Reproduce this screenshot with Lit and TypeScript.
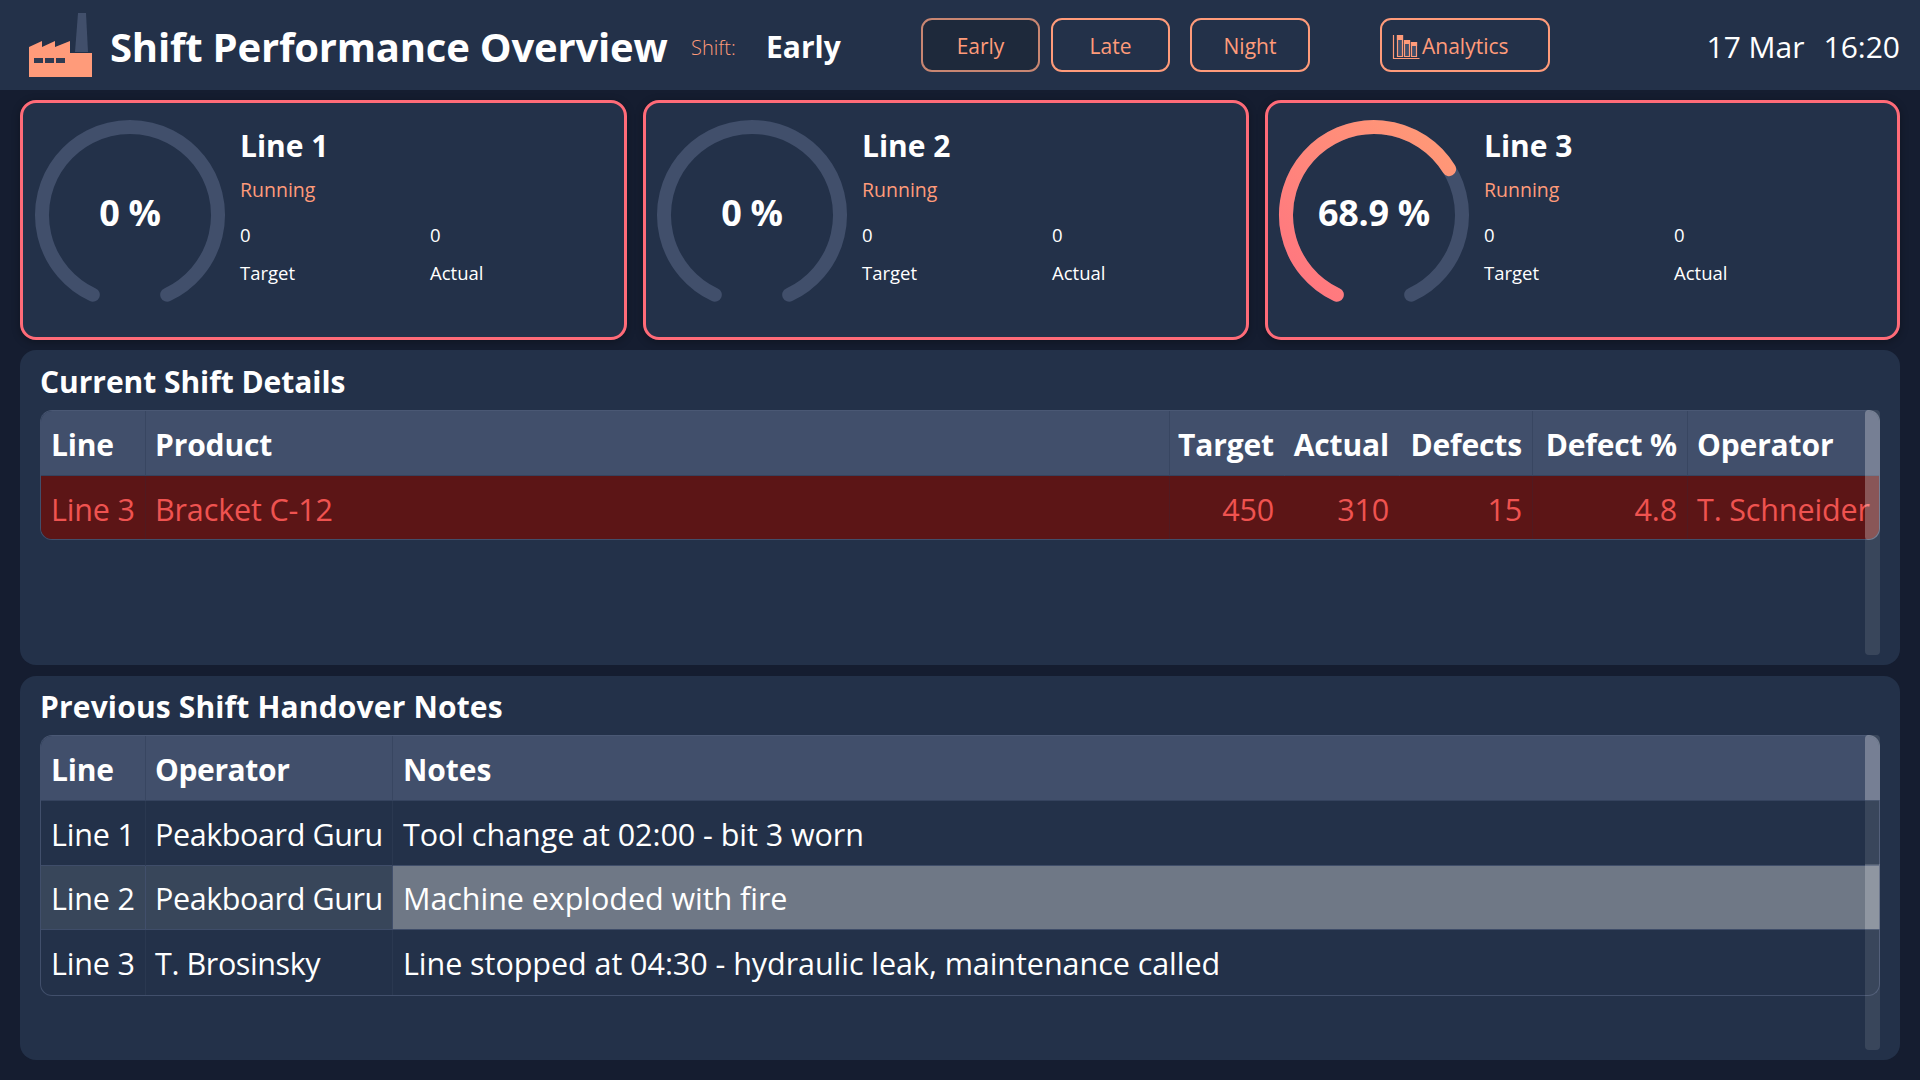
import { LitElement, html, css, svg } from "lit";
import { customElement } from "lit/decorators.js";

const R = 88;
const SWEEP = 310;

function gaugeArc(pct: number) {
  const start = 205;
  const end = start + (SWEEP * pct) / 100;
  const pt = (a: number) => {
    const r = (a * Math.PI) / 180;
    return [105 + R * Math.sin(r), 105 - R * Math.cos(r)];
  };
  const [x1, y1] = pt(start);
  const [x2, y2] = pt(end);
  return `M${x1} ${y1} A${R} ${R} 0 ${end - start > 180 ? 1 : 0} 1 ${x2} ${y2}`;
}

const lines = [
  { name: "Line 1", pct: 0, label: "0 %" },
  { name: "Line 2", pct: 0, label: "0 %" },
  { name: "Line 3", pct: 68.9, label: "68.9 %" },
];

const handover = [
  ["Line 1", "Peakboard Guru", "Tool change at 02:00 - bit 3 worn"],
  ["Line 2", "Peakboard Guru", "Machine exploded with fire"],
  ["Line 3", "T. Brosinsky", "Line stopped at 04:30 - hydraulic leak, maintenance called"],
];

@customElement("app-root")
export class AppRoot extends LitElement {
  static styles = css`
    :host {
      display: block;
      width: 1920px;
      height: 1080px;
      overflow: hidden;
      background: #151d30;
      color: #fff;
      font-family: "Open Sans", "Noto Sans", sans-serif;
      font-stretch: 90%;
    }
    .top {
      height: 90px;
      background: #233149;
      display: flex;
      align-items: center;
      position: relative;
    }
    .logo {
      width: 80px;
      height: 90px;
      margin-left: 20px;
      flex: none;
    }
    .title {
      font-size: 40px;
      font-weight: 700;
      letter-spacing: -0.2px;
      margin-left: 10px;
      width: 581px;
      white-space: nowrap;
      padding-top: 2px;
    }
    .shift-label {
      font-size: 20px;
      color: #ff9b7a;
      font-weight: 300;
      width: 75px;
      padding-top: 5px;
    }
    .shift-value {
      font-size: 30px;
      font-weight: 700;
      width: 155px;
      padding-top: 2px;
    }
    .btn {
      height: 54px;
      box-sizing: border-box;
      border: 2px solid #ff9b7a;
      border-radius: 11px;
      background: transparent;
      color: #ff9b7a;
      font: inherit;
      font-size: 21px;
      display: flex;
      align-items: center;
      justify-content: center;
      padding: 2px 0 0;
    }
    .btn.active {
      background: #1e293b;
      border-color: #c98672;
    }
    .b1 { width: 119px; margin-right: 11px; }
    .b2 { width: 119px; margin-right: 20px; }
    .b3 { width: 120px; margin-right: 70px; }
    .b4 {
      width: 170px;
      justify-content: flex-start;
      padding-left: 10px;
      gap: 2px;
    }
    .b4 svg { width: 28px; height: 28px; flex: none; }
    .clock {
      margin-left: auto;
      margin-right: 20px;
      font-size: 30px;
      display: flex;
      gap: 19px;
      font-weight: 400;
      padding-top: 2px;
    }

    .cards {
      display: grid;
      grid-template-columns: 607px 606px 635px;
      gap: 16px;
      padding: 10px 20px;
    }
    .card {
      height: 240px;
      box-sizing: border-box;
      border: 3px solid #ff6b78;
      border-radius: 16px;
      background: #233149;
      box-shadow: 0 2px 8px rgba(0, 0, 0, 0.3);
      display: flex;
      padding: 7px 0 0 2px;
    }
    .card + .card { padding-left: 1px; }
    .gauge {
      width: 210px;
      height: 210px;
      position: relative;
      flex: none;
    }
    .gauge svg { display: block; }
    .gauge-text {
      position: absolute;
      inset: 0 0 6px;
      display: flex;
      align-items: center;
      justify-content: center;
      font-size: 36px;
      font-weight: 700;
      letter-spacing: -0.3px;
    }
    .info { margin-left: 5px; padding-top: 16px; flex: 1; }
    .info h3 {
      margin: 0;
      font-size: 30px;
      font-weight: 700;
      line-height: 40px;
    }
    .status {
      color: #ff9b7a;
      font-size: 19.5px;
      font-weight: 400;
      line-height: 26px;
      margin-top: 11px;
    }
    .kpis {
      display: grid;
      grid-template-columns: 190px 1fr;
      font-size: 18.5px;
      line-height: 26px;
      margin-top: 19px;
      row-gap: 12px;
    }

    .panel {
      position: relative;
      margin: 0 20px;
      background: #233149;
      border-radius: 16px;
      box-sizing: border-box;
      padding: 0 20px;
    }
    .p1 { height: 315px; }
    .p2 { height: 384px; margin-top: 11px; }
    .panel h2 {
      margin: 0;
      font-size: 30px;
      font-weight: 700;
      letter-spacing: -0.05px;
      height: 60px;
      line-height: 64px;
    }
    .p2 h2 { height: 59px; line-height: 62px; letter-spacing: 0.15px; }
    .tbl {
      border: 1px solid #414f6b;
      border-top-color: #4a5874;
      border-radius: 12px;
      overflow: hidden;
      font-size: 30.5px;
      letter-spacing: -0.15px;
    }
    .row {
      display: grid;
      height: 64.5px;
      align-items: stretch;
    }
    .shift { grid-template-columns: 105px 1024px 115px 115px 133px 155px 1fr; }
    .notes { grid-template-columns: 105px 247px 1fr; }
    .cell {
      padding: 2px 10px 0;
      display: flex;
      align-items: center;
      white-space: nowrap;
      overflow: hidden;
      border-right: 1px solid #2a3850;
      border-bottom: 1px solid #3f4d69;
    }
    .cell:last-child { border-right: 0; }
    .cell.open { border-right-color: transparent; }
    .row:last-child .cell { border-bottom: 0; }
    .num { justify-content: flex-end; }
    .cell:nth-child(2) { padding-left: 9px; }
    .shift .cell:last-child { padding-left: 9px; }
    .notes .cell:nth-child(2) { letter-spacing: -0.4px; }
    .notes .cell:last-child { letter-spacing: -0.05px; }
    .head { background: #414f6b; font-weight: 700; font-size: 30px; height: 65px; }
    .head .cell { border-right-color: #384661; border-bottom-color: #35435e; }
    .head .cell.open { border-right-color: transparent; }
    .alarm { background: #5c1516; color: #ef5350; height: 63px; }
    .alarm .cell { border-right-color: #501a20; }
    .alarm .cell.open { border-right-color: transparent; }
    .sel { background: #38465a; }
    .sel .cell { border-right-color: #414f6b; }
    .sel .cell:last-child { background: #6f7886; }
    .sbar {
      position: absolute;
      right: 20px;
      width: 15px;
      bottom: 10px;
      background: rgba(255, 255, 255, 0.1);
      border-radius: 4px;
      display: flex;
      flex-direction: column;
      pointer-events: none;
    }
    .p1 .sbar { top: 60px; }
    .p2 .sbar { top: 59px; }
    .thumb {
      background: rgba(255, 255, 255, 0.2);
      border-radius: 4px 4px 0 0;
    }
    .p1 .thumb { height: 130px; border-radius: 4px 12px 12px 4px; }
    .p2 .thumb { height: 65px; border-radius: 4px 12px 0 0; }
    .band { background: rgba(255, 255, 255, 0.14); height: 65px; margin-top: 64px; }
  `;

  renderGauge(pct: number, label: string, id: string) {
    return html`<div class="gauge">
      <svg width="210" height="210" viewBox="0 0 210 210" fill="none">
        ${svg`<defs><linearGradient id=${id} x1="0" y1="1" x2="1" y2="0">
          <stop offset="0" stop-color="#ff7480"/><stop offset="1" stop-color="#ff9b76"/>
        </linearGradient></defs>`}
        ${svg`<path d=${gaugeArc(100)} stroke="#414f6b" stroke-width="14" stroke-linecap="round"/>`}
        ${pct > 0
          ? svg`<path d=${gaugeArc(pct)} stroke=${`url(#${id})`} stroke-width="14" stroke-linecap="round"/>`
          : ""}
      </svg>
      <div class="gauge-text">${label}</div>
    </div>`;
  }

  render() {
    return html`
      <div class="top">
        <svg class="logo" viewBox="0 0 80 90">
          <path d="M55 52 L58 13 L66 13 L68 52 Z" fill="#414f6b" />
          <path
            d="M9 47 L22 41 L22 47 L35 41 L35 47 L50 41 L50 53 L72 53 L72 77 L9 77 Z"
            fill="#ff9b7a"
          />
          <path d="M14 58 h9 v5 h-9 z M25 58 h9 v5 h-9 z M36 58 h9 v5 h-9 z" fill="#2f3b52" />
        </svg>
        <div class="title">Shift Performance Overview</div>
        <div class="shift-label">Shift:</div>
        <div class="shift-value">Early</div>
        <button class="btn active b1">Early</button>
        <button class="btn b2">Late</button>
        <button class="btn b3">Night</button>
        <button class="btn b4">
          <svg viewBox="0 0 28 28" fill="#414f6b" stroke="#ff9b7a" stroke-width="1.2">
            <path d="M1.5 3 V26.5 H27.5" fill="none" />
            <path d="M5.5 3.5 h5 v21 h-5 z M12.5 8.5 h5 v16 h-5 z M19.5 10.5 h5 v14 h-5 z" />
            <path d="M5.5 3.5 h5 v4 h-5 z M12.5 8.5 h5 v3 h-5 z M19.5 10.5 h5 v3 h-5 z" fill="#ff9b7a" />
          </svg>
          Analytics
        </button>
        <div class="clock"><span>17 Mar</span><span>16:20</span></div>
      </div>

      <div class="cards">
        ${lines.map(
          (l, i) => html`<div class="card">
            ${this.renderGauge(l.pct, l.label, `g${i}`)}
            <div class="info">
              <h3>${l.name}</h3>
              <div class="status">Running</div>
              <div class="kpis">
                <span>0</span><span>0</span>
                <span>Target</span><span>Actual</span>
              </div>
            </div>
          </div>`
        )}
      </div>

      <section class="panel p1">
        <h2>Current Shift Details</h2>
        <div class="tbl">
          <div class="row shift head">
            <div class="cell">Line</div>
            <div class="cell">Product</div>
            <div class="cell num open">Target</div>
            <div class="cell num open">Actual</div>
            <div class="cell num">Defects</div>
            <div class="cell num">Defect %</div>
            <div class="cell">Operator</div>
          </div>
          <div class="row shift alarm">
            <div class="cell">Line 3</div>
            <div class="cell">Bracket C-12</div>
            <div class="cell num open">450</div>
            <div class="cell num open">310</div>
            <div class="cell num">15</div>
            <div class="cell num">4.8</div>
            <div class="cell">T. Schneider</div>
          </div>
        </div>
        <div class="sbar"><div class="thumb"></div></div>
      </section>

      <section class="panel p2">
        <h2>Previous Shift Handover Notes</h2>
        <div class="tbl">
          <div class="row notes head">
            <div class="cell">Line</div>
            <div class="cell">Operator</div>
            <div class="cell">Notes</div>
          </div>
          ${handover.map(
            (r, i) => html`<div class="row notes ${i === 1 ? "sel" : ""}">
              ${r.map((c) => html`<div class="cell">${c}</div>`)}
            </div>`
          )}
        </div>
        <div class="sbar">
          <div class="thumb"></div>
          <div class="band"></div>
        </div>
      </section>
    `;
  }
}
